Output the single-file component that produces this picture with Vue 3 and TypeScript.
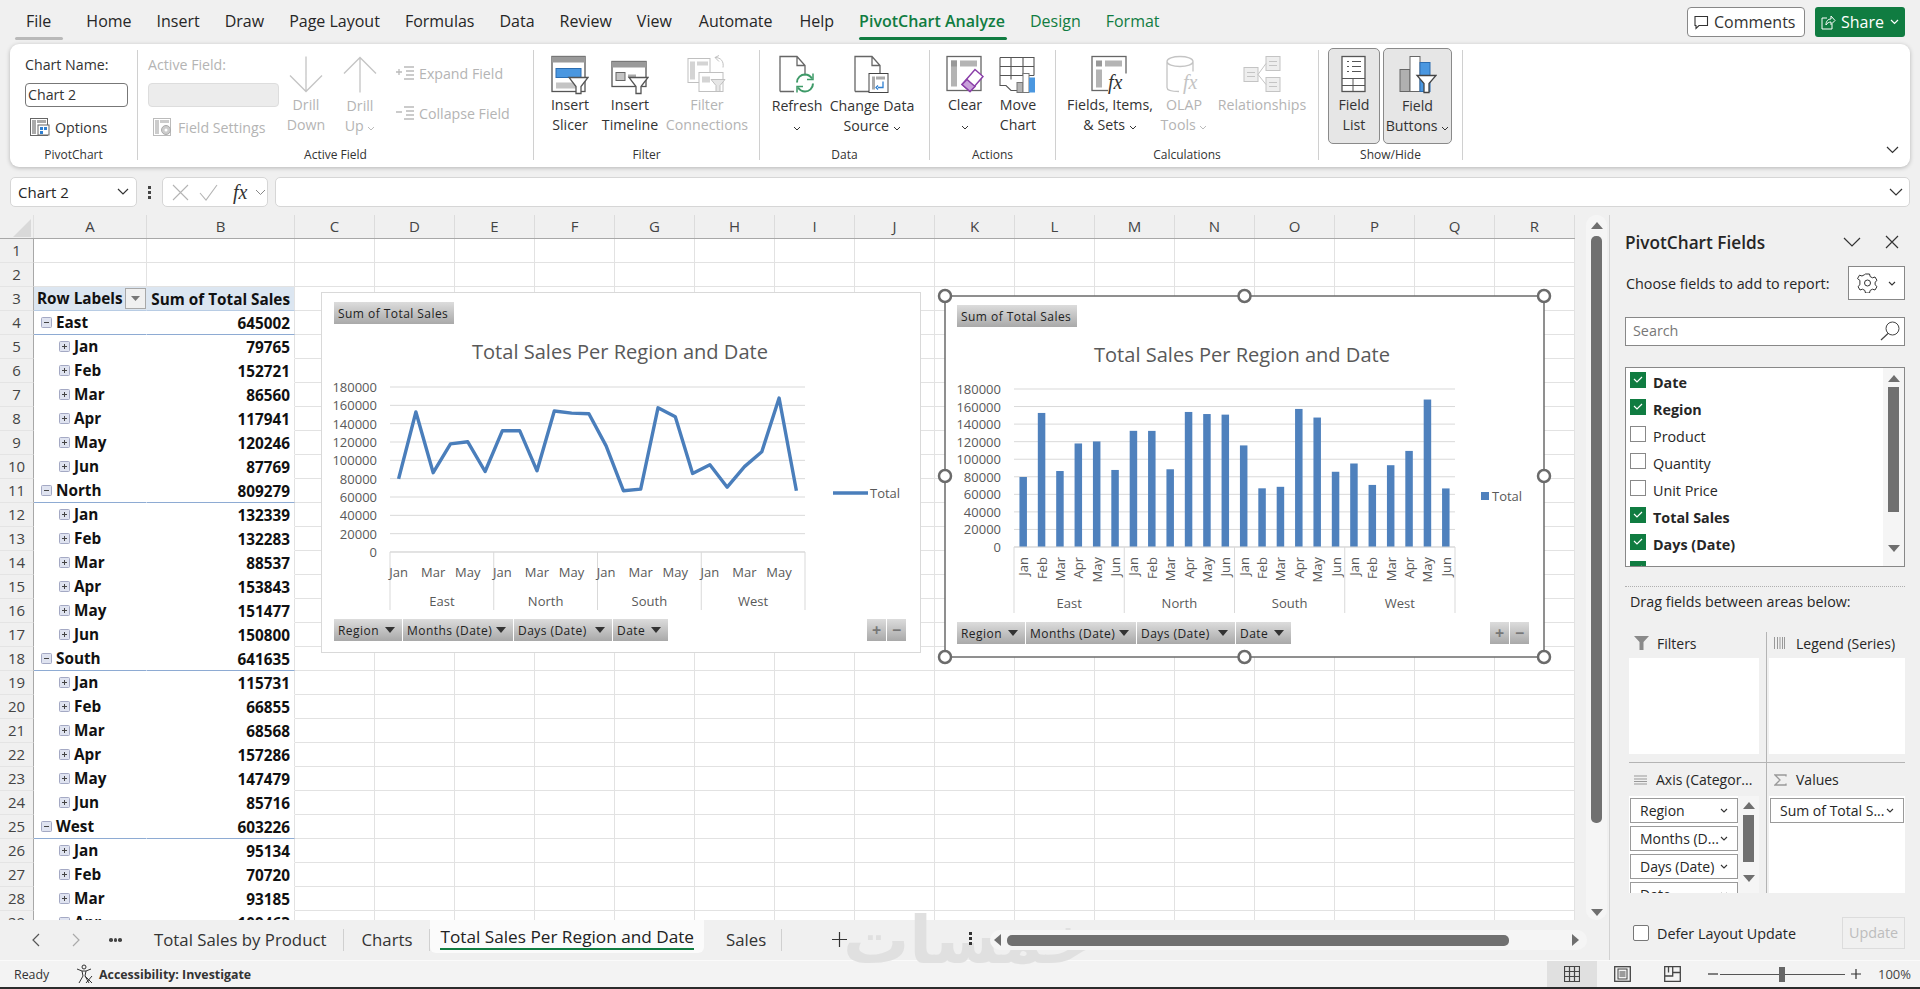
<script setup lang="ts">
const menuTabs = ['Home', 'Insert', 'Draw', 'Page Layout', 'Formulas', 'Data', 'Review', 'View', 'Automate', 'Help']
const columns = 'CDEFGHIJKLMNOPQR'.split('')

type Row = { n: number; kind: string; label: string; value: string }
const months = ['Jan', 'Feb', 'Mar', 'Apr', 'May', 'Jun']
const regions = [
  { name: 'East', total: '645002', values: [79765, 152721, 86560, 117941, 120246, 87769] },
  { name: 'North', total: '809279', values: [132339, 132283, 88537, 153843, 151477, 150800] },
  { name: 'South', total: '641635', values: [115731, 66855, 68568, 157286, 147479, 85716] },
  { name: 'West', total: '603226', values: [95134, 70720, 93185, 109463, 168000, 66724] },
]

const rows: Row[] = [
  { n: 1, kind: 'empty', label: '', value: '' },
  { n: 2, kind: 'empty', label: '', value: '' },
  { n: 3, kind: 'head', label: 'Row Labels', value: 'Sum of Total Sales' },
]
for (const r of regions) {
  rows.push({ n: rows.length + 1, kind: 'region', label: r.name, value: r.total })
  r.values.forEach((v, i) => rows.push({ n: rows.length + 1, kind: 'month', label: months[i], value: String(v) }))
}
const visibleRows = rows.slice(0, 29)

const series = regions.flatMap((r) => r.values)
const axisValues = [180000, 160000, 140000, 120000, 100000, 80000, 60000, 40000, 20000, 0]

function plot(x: number, y: number, w: number, h: number) {
  const step = w / 24
  return {
    x, y, w, h, step,
    slot: (i: number) => x + (i + 0.5) * step,
    val: (v: number) => y + h - (v / 180000) * h,
  }
}
const lineChart = plot(69, 95, 415, 165)
const barChart = plot(69, 93, 441, 158)
const linePoints = series.map((v, i) => `${lineChart.slot(i).toFixed(1)},${lineChart.val(v).toFixed(1)}`).join(' ')
const handles = [[0, 0], [299.5, 0], [599, 0], [0, 180], [599, 180], [0, 361], [299.5, 361], [599, 361]]
const lineFields = ['Region', 'Months (Date)', 'Days (Date)', 'Date']

const fieldList = [
  { name: 'Date', on: true },
  { name: 'Region', on: true },
  { name: 'Product', on: false },
  { name: 'Quantity', on: false },
  { name: 'Unit Price', on: false },
  { name: 'Total Sales', on: true },
  { name: 'Days (Date)', on: true },
  { name: 'Months (Date)', on: true },
]
const axisItems = ['Region', 'Months (D...', 'Days (Date)', 'Date']
</script>

<template>
  <div class="app">
    <header class="menu">
      <span class="tab file">File</span>
      <span v-for="t in menuTabs" :key="t" class="tab">{{ t }}</span>
      <span class="tab green active">PivotChart Analyze</span>
      <span class="tab green">Design</span>
      <span class="tab green">Format</span>
      <div class="menu-right">
        <button class="comments">
          <svg width="15" height="15" viewBox="0 0 15 15"><path d="M1 1.5h12.5v9H5l-3 3v-3H1z" fill="none" stroke="#333" stroke-width="1.1"/></svg>
          Comments
        </button>
        <button class="share">
          <svg width="15" height="15" viewBox="0 0 15 15"><path d="M6 3H1v11h10V9M5 10c0-4 2-6 5-6V1l4 4.500-4 4V7c-2 0-4 1-5 3z" fill="none" stroke="#fff" stroke-width="1"/></svg>
          Share
          <svg class="chev" width="9" height="6" viewBox="0 0 9 6"><path d="M1 1l3.500 3.500L8 1" fill="none" stroke="#fff" stroke-width="1.2"/></svg>
        </button>
      </div>
    </header>

    <section class="ribbon">
      <div class="group" style="width: 128px">
        <div class="body stack pl15">
          <div class="line">Chart Name:</div>
          <div class="input">Chart 2</div>
          <div class="line indent">
            <svg width="20" height="18" viewBox="0 0 20 18"><rect x=".5" y=".5" width="17" height="17" fill="#fff" stroke="#666"/><rect x="2" y="2" width="4" height="14" fill="#aaa"/><rect x="7" y="2" width="9" height="3" fill="#aaa"/><rect x="8" y="7" width="11" height="10" fill="#fff" stroke="#666"/><rect x="10" y="9" width="3" height="3" fill="#2f7fd0"/><rect x="14" y="9" width="3" height="3" fill="#2f7fd0"/><rect x="10" y="13" width="3" height="3" fill="#2f7fd0"/></svg>
            Options
          </div>
        </div>
        <div class="glabel">PivotChart</div>
      </div>

      <div class="group off" style="width: 396px">
        <div class="body">
          <div class="stack active-field">
            <div class="line">Active Field:</div>
            <div class="input blank"></div>
            <div class="line indent">
              <svg width="20" height="18" viewBox="0 0 20 18"><rect x=".5" y=".5" width="17" height="17" fill="#fff" stroke="#bbb"/><rect x="2" y="2" width="4" height="14" fill="#ccc"/><rect x="7" y="2" width="9" height="3" fill="#ccc"/><circle cx="13" cy="12" r="4.500" fill="#ccc" stroke="#aaa"/><circle cx="13" cy="12" r="1.500" fill="#fff"/></svg>
              Field Settings
            </div>
          </div>
          <div class="big" style="width: 54px">
            <svg class="ico" width="34" height="38" viewBox="0 0 34 38"><path d="M17 1v35M1 20l16 16 16-16" fill="none" stroke="#c4c4c4" stroke-width="1.300"/></svg>
            <span>Drill<br />Down</span>
          </div>
          <div class="big low" style="width: 54px">
            <svg class="ico" width="34" height="38" viewBox="0 0 34 38"><path d="M17 37V2M1 18L17 2l16 16" fill="none" stroke="#c4c4c4" stroke-width="1.300"/></svg>
            <span>Drill<br />Up <svg class="chev" width="8" height="5" viewBox="0 0 8 5"><path d="M1 1l3 3 3-3" fill="none" stroke="#bbb"/></svg></span>
          </div>
          <div class="small-col">
            <div class="line">
              <svg width="18" height="14" viewBox="0 0 18 14"><path d="M8 1h10M10 5h8M10 9h8M8 13h10M0 6h6M3 3v6" fill="none" stroke="#bbb" stroke-width="1.300"/></svg>
              Expand Field
            </div>
            <div class="line">
              <svg width="18" height="14" viewBox="0 0 18 14"><path d="M8 1h10M10 5h8M10 9h8M8 13h10M0 6h6" fill="none" stroke="#bbb" stroke-width="1.300"/></svg>
              Collapse Field
            </div>
          </div>
        </div>
        <div class="glabel on">Active Field</div>
      </div>

      <div class="group" style="width: 226px">
        <div class="body pl6">
          <div class="big" style="width: 60px">
            <svg class="ico" width="38" height="38" viewBox="0 0 38 38"><rect x="1" y="1" width="33" height="35" fill="#fff" stroke="#555" stroke-width="1.300"/><rect x="1" y="1" width="33" height="6" fill="#9a9a9a"/><rect x="5" y="13" width="25" height="9" fill="#4a97e0" stroke="#2c6db0"/><rect x="5" y="27" width="20" height="6" fill="#c4c4c4"/><path d="M18 22h19l-7 9v7h-5v-7z" fill="#fff" stroke="#555" stroke-width="1.300"/></svg>
            <span>Insert<br />Slicer</span>
          </div>
          <div class="big" style="width: 60px">
            <svg class="ico" width="38" height="38" viewBox="0 0 38 38"><rect x="1" y="6" width="34" height="25" fill="#fff" stroke="#555" stroke-width="1.300"/><rect x="1" y="6" width="34" height="6" fill="#9a9a9a"/><rect x="5" y="17" width="9" height="8" fill="#c4c4c4" stroke="#666"/><rect x="17" y="19" width="8" height="3" fill="#aaa"/><path d="M18 22h19l-7 9v7h-5v-7z" fill="#fff" stroke="#555" stroke-width="1.300"/></svg>
            <span>Insert<br />Timeline</span>
          </div>
          <div class="big off" style="width: 94px">
            <svg class="ico" width="40" height="38" viewBox="0 0 40 38"><rect x="1" y="3" width="22" height="24" fill="#fff" stroke="#c0c0c0"/><rect x="3" y="6" width="5" height="18" fill="#d4d4d4"/><rect x="10" y="6" width="11" height="4" fill="#d4d4d4"/><rect x="12" y="17" width="24" height="19" fill="#fff" stroke="#c0c0c0"/><rect x="15" y="21" width="8" height="6" fill="#d4d4d4"/><path d="M24 24h14l-5 6v6h-4v-6z" fill="#e6e6e6" stroke="#c0c0c0"/><path d="M28 2c6 0 9 4 8 10M28 2l4-2M28 2l4 4" fill="none" stroke="#c0c0c0"/></svg>
            <span>Filter<br />Connections</span>
          </div>
        </div>
        <div class="glabel">Filter</div>
      </div>

      <div class="group" style="width: 170px">
        <div class="body pl2">
          <div class="big low" style="width: 70px">
            <svg class="ico" width="36" height="38" viewBox="0 0 36 38"><path d="M1 36V1h17l8 9v10M1 36h14M18 1v9h8" fill="#fff" stroke="#666" stroke-width="1.300"/><path d="M18 27c0-5 4-8 8-8 3 0 5 1 7 4M34 28c0 5-4 8-8 8-3 0-5-1-7-4" fill="none" stroke="#3e9a68" stroke-width="2"/><path d="M34 18v6h-6M18 37v-6h6" fill="none" stroke="#3e9a68" stroke-width="1.500"/></svg>
            <span>Refresh<br /><svg class="chev" width="8" height="5" viewBox="0 0 8 5"><path d="M1 1l3 3 3-3" fill="none" stroke="#333"/></svg></span>
          </div>
          <div class="big low" style="width: 80px">
            <svg class="ico" width="36" height="38" viewBox="0 0 36 38"><path d="M1 36V1h17l8 9v8M1 36h14M18 1v9h8" fill="#fff" stroke="#666" stroke-width="1.300"/><rect x="15" y="18" width="19" height="19" fill="#fff" stroke="#444"/><rect x="18" y="21" width="3" height="13" fill="#aaa"/><rect x="22" y="21" width="9" height="3" fill="#aaa"/><path d="M29 26v6h-5M24 30l-2 2 2 2" fill="none" stroke="#2f7fd0" stroke-width="1.300"/></svg>
            <span>Change Data<br />Source <svg class="chev" width="8" height="5" viewBox="0 0 8 5"><path d="M1 1l3 3 3-3" fill="none" stroke="#333"/></svg></span>
          </div>
        </div>
        <div class="glabel">Data</div>
      </div>

      <div class="group" style="width: 126px">
        <div class="body pl8">
          <div class="big" style="width: 54px">
            <svg class="ico" width="38" height="38" viewBox="0 0 38 38"><rect x="1" y="1" width="34" height="34" fill="#fff" stroke="#666" stroke-width="1.300"/><rect x="5" y="5" width="6" height="26" fill="#b4b4b4"/><rect x="14" y="5" width="17" height="6" fill="#b4b4b4"/><rect x="5" y="5" width="6" height="6" fill="#999"/><path d="M16 29l13-15 8 7-13 15z" fill="#fff" stroke="#8a3ea8" stroke-width="1.500"/><path d="M16 29l5-5 8 7-5 5z" fill="#c8a0da" stroke="#8a3ea8" stroke-width="1.500"/></svg>
            <span>Clear<br /><svg class="chev" width="8" height="5" viewBox="0 0 8 5"><path d="M1 1l3 3 3-3" fill="none" stroke="#333"/></svg></span>
          </div>
          <div class="big" style="width: 52px">
            <svg class="ico" width="38" height="38" viewBox="0 0 38 38"><path d="M1 2h34v18M1 2v28h6l5 5h6M1 11h34M1 20h34M12 2v22M24 2v18" fill="#fff" stroke="#555" stroke-width="1.100"/><rect x="18" y="27" width="6" height="10" fill="#b4b4b4" stroke="#777"/><rect x="24" y="18" width="6" height="19" fill="#fff" stroke="#777"/><rect x="30" y="22" width="6" height="15" fill="#4a97e0"/></svg>
            <span>Move<br />Chart</span>
          </div>
        </div>
        <div class="glabel">Actions</div>
      </div>

      <div class="group" style="width: 263px">
        <div class="body pl4">
          <div class="big" style="width: 100px">
            <svg class="ico" width="38" height="38" viewBox="0 0 38 38"><rect x="1" y="1" width="34" height="34" fill="#fff" stroke="#666" stroke-width="1.300"/><rect x="5" y="5" width="6" height="6" fill="#999"/><rect x="14" y="5" width="17" height="6" fill="#b4b4b4"/><rect x="5" y="14" width="6" height="18" fill="#b4b4b4"/><rect x="17" y="18" width="20" height="20" fill="#fff"/><text x="17" y="33" class="fx-big">fx</text></svg>
            <span>Fields, Items,<br />&amp; Sets <svg class="chev" width="8" height="5" viewBox="0 0 8 5"><path d="M1 1l3 3 3-3" fill="none" stroke="#333"/></svg></span>
          </div>
          <div class="big off" style="width: 48px">
            <svg class="ico" width="38" height="38" viewBox="0 0 38 38"><path d="M2 6v26c0 3 5 4 12 4M2 6c0-3 6-5 13-5s13 2 13 5v10M2 6c0 3 6 5 13 5s13-2 13-5" fill="#fff" stroke="#c4c4c4" stroke-width="1.300"/><text x="18" y="33" class="fx-big faint">fx</text></svg>
            <span>OLAP<br />Tools <svg class="chev" width="8" height="5" viewBox="0 0 8 5"><path d="M1 1l3 3 3-3" fill="none" stroke="#bbb"/></svg></span>
          </div>
          <div class="big off" style="width: 108px">
            <svg class="ico" width="38" height="38" viewBox="0 0 38 38"><rect x="1" y="12" width="14" height="14" fill="#eee" stroke="#c4c4c4"/><rect x="23" y="1" width="14" height="14" fill="#eee" stroke="#c4c4c4"/><rect x="23" y="22" width="14" height="14" fill="#eee" stroke="#c4c4c4"/><path d="M15 19l8-11M15 19l8 10M4 17h8M4 21h8M26 6h8M26 10h8M26 27h8M26 31h8" stroke="#c4c4c4" fill="none"/></svg>
            <span>Relationships</span>
          </div>
        </div>
        <div class="glabel">Calculations</div>
      </div>

      <div class="group" style="width: 144px">
        <div class="body pl9">
          <div class="big toggle" style="width: 52px">
            <svg class="ico" width="26" height="38" viewBox="0 0 26 38"><rect x="1" y="1" width="23" height="35" fill="#fff" stroke="#555" stroke-width="1.300"/><path d="M1 23h23M1 30h23M12 23v13M6 6h2M11 6h9M6 11h2M11 11h9M6 16h2M11 16h9" stroke="#555" fill="none"/></svg>
            <span>Field<br />List</span>
          </div>
          <div class="big toggle low" style="width: 69px">
            <svg class="ico" width="38" height="38" viewBox="0 0 38 38"><rect x="1" y="14" width="10" height="22" fill="#b0b0b0" stroke="#666"/><rect x="11" y="1" width="10" height="35" fill="#fff" stroke="#666"/><rect x="21" y="7" width="10" height="29" fill="#4a97e0" stroke="#2c6db0"/><path d="M18 20h19l-7 8v9h-5v-9z" fill="#fff" stroke="#444" stroke-width="1.300"/></svg>
            <span>Field<br />Buttons <svg class="chev" width="8" height="5" viewBox="0 0 8 5"><path d="M1 1l3 3 3-3" fill="none" stroke="#333"/></svg></span>
          </div>
        </div>
        <div class="glabel">Show/Hide</div>
      </div>

      <svg class="collapse" width="13" height="8" viewBox="0 0 13 8"><path d="M1 1l5.500 5.500L12 1" fill="none" stroke="#333" stroke-width="1.200"/></svg>
    </section>

    <section class="formula">
      <div class="namebox">
        Chart 2
        <svg width="12" height="8" viewBox="0 0 12 8"><path d="M1 1l5 5 5-5" fill="none" stroke="#333" stroke-width="1.200"/></svg>
      </div>
      <div class="dots"><i></i><i></i><i></i></div>
      <div class="fxbox">
        <svg width="17" height="17" viewBox="0 0 17 17"><path d="M1 1l15 15M16 1L1 16" stroke="#b4b4b4" stroke-width="1.100"/></svg>
        <svg width="19" height="17" viewBox="0 0 19 17"><path d="M1 9l6 7L18 1" fill="none" stroke="#b4b4b4" stroke-width="1.100"/></svg>
        <span class="fx">fx</span>
        <svg width="11" height="7" viewBox="0 0 11 7"><path d="M1 1l4.500 4.500L10 1" fill="none" stroke="#888"/></svg>
      </div>
      <div class="fxinput">
        <svg width="14" height="8" viewBox="0 0 14 8"><path d="M1 1l6 6 6-6" fill="none" stroke="#333" stroke-width="1.200"/></svg>
      </div>
    </section>

    <main class="main">
      <div class="left">
        <div class="sheet-row">
          <div class="grid">
            <div class="col-head">
              <div class="corner"><svg width="18" height="18" viewBox="0 0 18 18"><path d="M18 0v18H0z" fill="#d9d9d9"/></svg></div>
              <div class="ch a">A</div>
              <div class="ch b">B</div>
              <div v-for="c in columns" :key="c" class="ch">{{ c }}</div>
            </div>
            <div v-for="r in visibleRows" :key="r.n" class="row">
              <div class="rh">{{ r.n }}</div>
              <div class="cell a" :class="r.kind">
                <template v-if="r.kind === 'head'">
                  <span>{{ r.label }}</span>
                  <span class="drop"><svg width="9" height="5" viewBox="0 0 9 5"><path d="M0 0h9L4.500 5z" fill="#777"/></svg></span>
                </template>
                <template v-else-if="r.kind === 'region' || r.kind === 'month'">
                  <span class="exp">
                    <svg width="11" height="11" viewBox="0 0 11 11"><rect x=".5" y=".5" width="10" height="10" rx="1" fill="#dfe3f0" stroke="#a4a9c4"/><path d="M3 5.500h5" stroke="#444"/><path v-if="r.kind === 'month'" d="M5.500 3v5" stroke="#444"/></svg>
                  </span>
                  <span>{{ r.label }}</span>
                </template>
              </div>
              <div class="cell b" :class="r.kind">{{ r.value }}</div>
              <div v-for="c in columns" :key="c" class="cell"></div>
            </div>

            <div class="chart first" style="left: 321px; top: 77px">
              <svg width="600" height="361" viewBox="0 0 600 361">
                <g class="gridlines">
                  <line v-for="v in axisValues" :key="v" :x1="lineChart.x" :x2="lineChart.x + lineChart.w" :y1="lineChart.val(v)" :y2="lineChart.val(v)" />
                </g>
                <text v-for="v in axisValues" :key="v" class="tick" x="56" :y="lineChart.val(v) + 5" text-anchor="end">{{ v }}</text>
                <text class="title" x="299" y="67" text-anchor="middle" textLength="296" lengthAdjust="spacingAndGlyphs">Total Sales Per Region and Date</text>
                <polyline :points="linePoints" fill="none" stroke="#4a7ebb" stroke-width="3.400" stroke-linejoin="round" />
                <line class="sep" x1="69" x2="484" y1="260" y2="260" />
                <g v-for="(r, i) in regions" :key="r.name">
                  <line class="sep" :x1="69 + i * 103.75" :x2="69 + i * 103.75" y1="260" y2="318" />
                  <text class="tick" :x="lineChart.slot(i * 6)" y="285" text-anchor="middle">Jan</text>
                  <text class="tick" :x="lineChart.slot(i * 6 + 2)" y="285" text-anchor="middle">Mar</text>
                  <text class="tick" :x="lineChart.slot(i * 6 + 4)" y="285" text-anchor="middle">May</text>
                  <text class="tick" :x="69 + (i + 0.5) * 103.75" y="314" text-anchor="middle">{{ r.name }}</text>
                </g>
                <line class="sep" x1="484" x2="484" y1="260" y2="318" />
                <line x1="512" x2="547" y1="201" y2="201" stroke="#4a7ebb" stroke-width="3.400" />
                <text class="tick" x="549" y="206">Total</text>
              </svg>
              <div class="fbtn top">Sum of Total Sales</div>
              <div class="fbtn-row">
                <div v-for="(f, i) in lineFields" :key="f" class="fbtn" :class="'f' + i">{{ f }}<i class="tri"></i></div>
                <div class="zoomers"><div class="fbtn zb">+</div><div class="fbtn zb">−</div></div>
              </div>
            </div>

            <div class="chart selected" style="left: 945px; top: 81px">
              <svg width="599" height="361" viewBox="0 0 599 361">
                <g class="gridlines">
                  <line v-for="v in axisValues" :key="v" :x1="barChart.x" :x2="barChart.x + barChart.w" :y1="barChart.val(v)" :y2="barChart.val(v)" />
                </g>
                <text v-for="v in axisValues" :key="v" class="tick" x="56" :y="barChart.val(v) + 5" text-anchor="end">{{ v }}</text>
                <text class="title" x="297" y="66" text-anchor="middle" textLength="296" lengthAdjust="spacingAndGlyphs">Total Sales Per Region and Date</text>
                <rect v-for="(v, i) in series" :key="i" :x="barChart.slot(i) - 3.750" :y="barChart.val(v)" width="7.500" :height="barChart.y + barChart.h - barChart.val(v)" fill="#4f81bd" />
                <line class="sep" x1="69" x2="510" y1="251" y2="251" />
                <text v-for="(v, i) in series" :key="'m' + i" class="tick" text-anchor="end" :transform="`translate(${barChart.slot(i) + 5} 261) rotate(-90)`">{{ months[i % 6] }}</text>
                <g v-for="(r, i) in regions" :key="r.name">
                  <line class="sep" :x1="69 + i * 110.25" :x2="69 + i * 110.25" y1="251" y2="317" />
                  <text class="tick" :x="69 + (i + 0.5) * 110.25" y="312" text-anchor="middle">{{ r.name }}</text>
                </g>
                <line class="sep" x1="510" x2="510" y1="251" y2="317" />
                <rect x="536" y="196" width="8" height="8" fill="#4f81bd" />
                <text class="tick" x="547" y="205">Total</text>
                <rect class="frame" x="0" y="0" width="599" height="361" />
                <circle v-for="(h, i) in handles" :key="i" class="handle" :cx="h[0]" :cy="h[1]" r="6" />
              </svg>
              <div class="fbtn top">Sum of Total Sales</div>
              <div class="fbtn-row">
                <div v-for="(f, i) in lineFields" :key="f" class="fbtn" :class="'f' + i">{{ f }}<i class="tri"></i></div>
                <div class="zoomers"><div class="fbtn zb">+</div><div class="fbtn zb">−</div></div>
              </div>
            </div>
          </div>

          <div class="vscroll">
            <i class="arrow up"></i>
            <div class="vthumb"></div>
            <i class="arrow down"></i>
          </div>
        </div>

        <div class="sheet-tabs">
          <svg class="nav" width="8" height="14" viewBox="0 0 8 14"><path d="M7 1L1 7l6 6" fill="none" stroke="#555" stroke-width="1.200"/></svg>
          <svg class="nav next" width="8" height="14" viewBox="0 0 8 14"><path d="M1 1l6 6-6 6" fill="none" stroke="#aaa" stroke-width="1.200"/></svg>
          <span class="more"><i></i><i></i><i></i></span>
          <span class="stab">Total Sales by Product</span>
          <span class="stab">Charts</span>
          <span class="stab current">Total Sales Per Region and Date</span>
          <span class="stab sales">Sales</span>
          <svg class="plus" width="15" height="15" viewBox="0 0 15 15"><path d="M7.500 0v15M0 7.500h15" stroke="#333" stroke-width="1.200"/></svg>
          <div class="dots tabdots"><i></i><i></i><i></i></div>
          <div class="hscroll">
            <i class="arrow left"></i>
            <div class="hthumb"></div>
            <i class="arrow right"></i>
          </div>
          <span class="watermark">خمسات</span>
        </div>
      </div>

      <aside class="pane">
        <div class="pane-title">
          <span>PivotChart Fields</span>
          <svg class="pt-chev" width="18" height="10" viewBox="0 0 18 10"><path d="M1 1l8 8 8-8" fill="none" stroke="#333" stroke-width="1.200"/></svg>
          <svg class="pt-x" width="14" height="14" viewBox="0 0 14 14"><path d="M1 1l12 12M13 1L1 13" stroke="#333" stroke-width="1.200"/></svg>
        </div>
        <div class="choose">
          <span>Choose fields to add to report:</span>
          <div class="gear">
            <svg width="21" height="20" viewBox="0 0 21 20"><path d="M8.500 1h4l.7 2.600 2.300 1.200 2.500-.8 2 3.400-1.900 1.800v2.600l1.900 1.800-2 3.400-2.500-.8-2.300 1.200-.7 2.600h-4l-.7-2.600-2.300-1.200-2.500.8-2-3.400 1.900-1.800V7.400L.5 5.600l2-3.400 2.500.8 2.300-1.200z" fill="none" stroke="#333"/><circle cx="10.500" cy="10" r="3" fill="none" stroke="#333"/></svg>
            <svg width="8" height="5" viewBox="0 0 8 5"><path d="M1 1l3 3 3-3" fill="none" stroke="#333" stroke-width="1.100"/></svg>
          </div>
        </div>
        <div class="search">
          <span>Search</span>
          <svg width="20" height="20" viewBox="0 0 20 20"><circle cx="12.500" cy="7.500" r="6.500" fill="none" stroke="#444"/><path d="M8 12.500L1 19" stroke="#444" stroke-width="1.200"/></svg>
        </div>
        <div class="fields">
          <div class="field-rows">
            <div v-for="f in fieldList" :key="f.name" class="field" :class="{ on: f.on }">
              <span class="box">
                <svg v-if="f.on" width="10" height="7" viewBox="0 0 10 7"><path d="M1 3l3 3 5-5" fill="none" stroke="#fff" stroke-width="1.200"/></svg>
              </span>
              <span>{{ f.name }}</span>
            </div>
          </div>
          <div class="field-scroll">
            <i class="arrow up"></i>
            <div class="fthumb"></div>
            <i class="arrow down"></i>
          </div>
        </div>
        <div class="drag">Drag fields between areas below:</div>
        <div class="zones">
          <div class="zone z-top">
            <div class="zhead tight">
              <svg width="16" height="14" viewBox="0 0 16 14"><path d="M0 0h15L9.500 6v8h-4V6z" fill="#8a8a8a"/></svg>
              Filters
            </div>
            <div class="zbody tall"></div>
          </div>
          <div class="zone z-top z-right">
            <div class="zhead wider">
              <svg width="11" height="12" viewBox="0 0 11 12"><path d="M.5 0v12M3.500 0v12M6 0v12M8.500 0v12M10.500 0v12" stroke="#999"/></svg>
              Legend (Series)
            </div>
            <div class="zbody tall"></div>
          </div>
          <div class="zone">
            <div class="zhead">
              <svg width="13" height="10" viewBox="0 0 13 10"><path d="M0 1h13M0 4h13M0 6.500h13M0 9h13" stroke="#999"/></svg>
              Axis (Categor...
            </div>
            <div class="zbody axis">
              <div class="axis-items">
                <div v-for="a in axisItems" :key="a" class="pill">
                  <span>{{ a }}</span>
                  <svg width="8" height="5" viewBox="0 0 8 5"><path d="M1 1l3 3 3-3" fill="none" stroke="#333" stroke-width="1.100"/></svg>
                </div>
              </div>
              <div class="axis-scroll">
                <i class="arrow up"></i>
                <div class="athumb"></div>
                <i class="arrow down"></i>
              </div>
            </div>
          </div>
          <div class="zone z-right">
            <div class="zhead">
              <svg width="13" height="12" viewBox="0 0 13 12"><path d="M12 2.500V1H1l5 5-5 5h11V9.500" fill="none" stroke="#999" stroke-width="1.300"/></svg>
              Values
            </div>
            <div class="zbody">
              <div class="pill wide">
                <span>Sum of Total S...</span>
                <svg width="8" height="5" viewBox="0 0 8 5"><path d="M1 1l3 3 3-3" fill="none" stroke="#333" stroke-width="1.100"/></svg>
              </div>
            </div>
          </div>
        </div>
        <div class="defer">
          <span class="box2"></span>
          <span class="defer-label">Defer Layout Update</span>
          <span class="update">Update</span>
        </div>
      </aside>
    </main>

    <footer class="status">
      <span class="ready">Ready</span>
      <svg width="18" height="20" viewBox="0 0 18 20"><circle cx="8" cy="3" r="2" fill="none" stroke="#333"/><path d="M1 5l5 2h4l5-2M6 7l1 5-4 7M10 7l-1 5 4 7M9 12l7 7M16 12l-6 7" fill="none" stroke="#333"/></svg>
      <b class="access">Accessibility: Investigate</b>
      <div class="views">
        <span class="vbtn current">
          <svg width="16" height="16" viewBox="0 0 16 16"><path d="M.5.500h15v15H.500zM.5 5.500h15M.5 10.500h15M5.500.5v15M10.500.5v15" fill="none" stroke="#444" stroke-width="1.200"/></svg>
        </span>
        <span class="vbtn">
          <svg width="17" height="16" viewBox="0 0 17 16"><rect x=".7" y=".7" width="15.600" height="14.600" fill="none" stroke="#444" stroke-width="1.300"/><rect x="4" y="3" width="9" height="10" fill="none" stroke="#444"/><path d="M5.500 6h6M5.500 8h6M5.500 10h6" stroke="#444"/></svg>
        </span>
        <span class="vbtn">
          <svg width="17" height="16" viewBox="0 0 17 16"><path d="M.7.700v14.600h15.600V.7zM.7 10h8V.7M4.500.7V6.500M8.700 6.500H16" fill="none" stroke="#444" stroke-width="1.300"/></svg>
        </span>
      </div>
      <div class="zoom">
        <svg width="10" height="2" viewBox="0 0 10 2"><path d="M0 1h10" stroke="#333" stroke-width="1.200"/></svg>
        <div class="slider"><i></i></div>
        <svg class="zplus" width="10" height="10" viewBox="0 0 10 10"><path d="M0 5h10M5 0v10" stroke="#333" stroke-width="1.200"/></svg>
        <span class="pct">100%</span>
      </div>
    </footer>
    <div class="taskbar"></div>
  </div>
</template>

<style>
html, body { margin: 0; padding: 0; background: #f0f0f0; overflow: hidden; }
</style>

<style scoped>
.app {
  width: 1920px;
  height: 989px;
  display: flex;
  flex-direction: column;
  background: #f0f0f0;
  font-family: "Open Sans", "Noto Sans", sans-serif;
  color: #262626;
  overflow: hidden;
}

.menu {
  height: 44px;
  flex: none;
  display: flex;
  align-items: center;
  gap: 25px;
  padding-left: 26px;
  font-size: 16px;
  box-sizing: border-box;
  padding-bottom: 2px;
}
.tab { position: relative; white-space: nowrap; }
.tab.file { margin-right: 10px; }
.tab:nth-child(10), .tab:nth-child(11) { margin-left: 2px; }
.tab.file::after, .tab.active::after {
  content: "";
  position: absolute;
  left: -11px;
  right: -12px;
  top: 27px;
  height: 3px;
  background: #b9b9b9;
  border-radius: 2px;
}
.tab.active { font-weight: 600; }
.tab.active::after { background: #107c41; left: 0; right: -2px; height: 3px; }
.tab.green { color: #107c41; }
.menu-right { margin-left: auto; display: flex; gap: 10px; padding-right: 15px; padding-top: 2px; }
.comments, .share {
  height: 30px;
  display: flex;
  align-items: center;
  font: inherit;
  box-sizing: border-box;
}
.comments { width: 118px; background: #fff; border: 1px solid #888; border-radius: 4px; gap: 5px; padding: 0 6px; color: #333; }
.share { width: 90px; background: #107c41; border: 0; border-radius: 3px; color: #fff; gap: 5px; padding: 0 6px; }
.share .chev { margin-left: 1px; }

.ribbon {
  height: 123px;
  flex: none;
  margin: 0 10px;
  background: #fff;
  border-radius: 9px;
  box-shadow: 0 1px 4px rgba(0, 0, 0, .25);
  display: flex;
  position: relative;
  font-size: 14.2px;
  color: #333;
}
.group {
  height: 110px;
  margin-top: 6px;
  border-right: 1px solid #d0d0d0;
  box-sizing: border-box;
  display: flex;
  flex-direction: column;
  flex: none;
}
.body { height: 96px; flex: none; display: flex; }
.glabel { height: 18px; line-height: 18px; text-align: center; font-size: 12px; color: #333; flex: none; }
.group.off, .off { color: #b4b4b4; }
.glabel.on { color: #333; }
.pl15 { padding-left: 15px; }
.pl2 { padding-left: 2px; }
.pl4 { padding-left: 4px; }
.pl6 { padding-left: 6px; }
.pl8 { padding-left: 8px; }
.pl9 { padding-left: 9px; }
.stack { flex-direction: column; display: flex; gap: 9px; padding-top: 4px; box-sizing: border-box; }
.line { height: 20px; display: flex; align-items: center; gap: 5px; white-space: nowrap; }
.line.indent { padding-left: 5px; height: 22px; }
.input {
  width: 103px;
  height: 24px;
  box-sizing: border-box;
  border: 1px solid #777;
  border-radius: 4px;
  line-height: 22px;
  padding-left: 2px;
  flex: none;
}
.input.blank { width: 131px; background: #ececec; border-color: #ddd; }
.active-field { padding-left: 10px; width: 141px; }
.small-col { padding: 13px 0 0 9px; display: flex; flex-direction: column; gap: 20px; box-sizing: border-box; }
.big {
  display: flex;
  flex-direction: column;
  align-items: center;
  padding-top: 4px;
  box-sizing: border-box;
  text-align: center;
  line-height: 20px;
  flex: none;
  white-space: nowrap;
}
.big .ico { height: 41px; flex: none; }
.big.low span { padding-top: 1px; }
.toggle {
  height: 96px;
  margin: -2px 3px 0 0;
  padding-top: 5px;
  background: #e6e6e6;
  border: 1px solid #8a8a8a;
  border-radius: 5px;
}
.fx-big { font: italic 20px "Liberation Serif", serif; fill: #333; }
.fx-big.faint { fill: #c4c4c4; }
.collapse { position: absolute; right: 11px; bottom: 13px; }

.formula {
  height: 30px;
  flex: none;
  margin: 10px 10px 8px;
  display: flex;
  align-items: stretch;
  font-size: 15px;
}
.namebox, .fxbox, .fxinput {
  background: #fff;
  border: 1px solid #d6d6d6;
  border-radius: 5px;
  box-sizing: border-box;
  display: flex;
  align-items: center;
}
.namebox { width: 127px; padding: 0 7px; justify-content: space-between; }
.dots { width: 25px; display: flex; flex-direction: column; gap: 2px; align-items: center; justify-content: center; }
.dots i { width: 3px; height: 3px; background: #444; }
.fxbox { width: 106px; padding: 0 0 0 9px; gap: 10px; }
.fx { font: italic 20px "Liberation Serif", serif; color: #333; margin: 0 -2px 0 5px; }
.fxinput { flex: 1; margin-left: 7px; justify-content: flex-end; padding-right: 6px; }

.main { flex: 1; min-height: 0; display: flex; }
.left { width: 1609px; flex: none; display: flex; flex-direction: column; }
.sheet-row { height: 705px; flex: none; display: flex; }
.grid { width: 1575px; height: 705px; position: relative; overflow: hidden; background: #fff; }
.col-head { display: flex; height: 24px; background: #f0f0f0; border-bottom: 1px solid #a8a8a8; box-sizing: border-box; }
.corner { width: 34px; flex: none; display: flex; align-items: flex-end; justify-content: flex-end; box-sizing: border-box; padding: 0 2px 1px 0; border-right: 1px solid #e0e0e0; }
.ch { width: 80px; flex: none; text-align: center; line-height: 23px; font-size: 15px; color: #444; border-right: 1px solid #dcdcdc; box-sizing: border-box; }
.ch.a { width: 113px; }
.ch.b { width: 148px; }
.row { display: flex; height: 24px; }
.rh {
  width: 34px;
  flex: none;
  box-sizing: border-box;
  background: #f0f0f0;
  border-right: 1px solid #a8a8a8;
  border-bottom: 1px solid #e4e4e4;
  text-align: center;
  line-height: 23px;
  font-size: 15px;
  color: #444;
}
.cell {
  width: 80px;
  flex: none;
  box-sizing: border-box;
  border-right: 1px solid #e2e2e2;
  border-bottom: 1px solid #e2e2e2;
  font-size: 15.3px;
  font-weight: 700;
  color: #111;
  line-height: 25px;
  white-space: nowrap;
  overflow: hidden;
}
.cell.a { width: 113px; display: flex; align-items: center; }
.cell.b { width: 148px; text-align: right; padding-right: 4px; }
.cell.head { background: #dce6f1; border-color: #dce6f1; border-bottom-color: #b8cce4; }
.cell.a.head { padding-left: 3px; justify-content: space-between; }
.cell.b.head { border-right-color: #e2e2e2; }
.cell.region { border-bottom-color: #8eabd3; border-right-color: transparent; }
.cell.b.region { border-right-color: #e2e2e2; }
.cell.month { border-bottom-color: transparent; border-right-color: transparent; }
.cell.b.month { border-right-color: #e2e2e2; }
.exp { display: flex; margin-right: 4px; }
.cell.a.region { padding-left: 7px; }
.cell.a.month { padding-left: 25px; }
.drop {
  width: 21px;
  height: 21px;
  flex: none;
  box-sizing: border-box;
  background: #f0f0f0;
  border: 1px solid #a8a8a8;
  display: flex;
  align-items: center;
  justify-content: center;
}

.chart {
  position: absolute;
  width: 600px;
  height: 361px;
  background: #fff;
  box-sizing: border-box;
  border: 1px solid #d9d9d9;
}
.chart svg { position: absolute; left: -1px; top: -1px; overflow: visible; }
.chart.selected { width: 599px; border-color: transparent; }
.gridlines line { stroke: #d9d9d9; stroke-width: 1; }
.sep { stroke: #d9d9d9; stroke-width: 1; }
.tick { font: 13px "Open Sans", sans-serif; fill: #595959; }
.title { font: 20px "Open Sans", sans-serif; fill: #595959; }
.frame { fill: none; stroke: #6b6b6b; stroke-width: 1.500; }
.handle { fill: #fff; stroke: #6b6b6b; stroke-width: 2.500; }
.fbtn {
  height: 22px;
  display: flex;
  align-items: center;
  justify-content: space-between;
  box-sizing: border-box;
  padding: 0 4px;
  font-size: 12px;
  letter-spacing: .45px;
  color: #222;
  background: linear-gradient(#dcdcdc, #a9a9a9);
  white-space: nowrap;
}
.fbtn.top { position: absolute; left: 11px; top: 8px; width: 120px; }
.first .fbtn.top { left: 12px; top: 9px; }
.fbtn-row { position: absolute; left: 11px; right: 15px; top: 325px; display: flex; gap: 1px; }
.first .fbtn-row { left: 12px; right: 14px; top: 326px; }
.chart.selected .fbtn-row { right: 14px; }
.f0 { width: 68px; }
.f1 { width: 110px; }
.f2 { width: 98px; }
.f3 { width: 55px; }
.tri { width: 0; height: 0; border: 5px solid transparent; border-top: 6px solid #333; border-bottom: 0; margin-right: 3px; }
.zoomers { margin-left: auto; display: flex; gap: 1px; }
.fbtn.zb { width: 19px; justify-content: center; padding: 0; font-size: 16px; font-weight: 700; color: #777; letter-spacing: 0; }

.arrow { display: block; width: 0; height: 0; flex: none; border: 6px solid transparent; }
.arrow.up { border-bottom: 7px solid #6f6f6f; border-top: 0; }
.arrow.down { border-top: 7px solid #6f6f6f; border-bottom: 0; }
.arrow.left { border-right: 7px solid #6f6f6f; border-left: 0; }
.arrow.right { border-left: 7px solid #6f6f6f; border-right: 0; }

.vscroll {
  width: 21px;
  margin-left: 11px;
  height: 705px;
  background: #f5f5f5;
  border-radius: 10px;
  display: flex;
  flex-direction: column;
  align-items: center;
  box-sizing: border-box;
  padding-top: 7px;
}
.vthumb { width: 11px; height: 587px; margin: 7px 0 0; background: #707070; border-radius: 5px; }
.vscroll .down { margin-top: auto; margin-bottom: 4px; }

.sheet-tabs {
  height: 40px;
  flex: none;
  display: flex;
  align-items: center;
  position: relative;
  z-index: 2;
  font-size: 16.8px;
  color: #333;
  box-sizing: border-box;
  padding-left: 32px;
  overflow: visible;
}
.nav { flex: none; }
.nav.next { margin-left: 32px; }
.more { display: flex; gap: 1px; margin: 0 15px 0 29px; width: 13px; flex: none; }
.more i { width: 3.5px; height: 3.5px; border-radius: 50%; background: #444; flex: none; }
.stab { padding: 0 17px; border-right: 1px solid #d0d0d0; white-space: nowrap; height: 22px; line-height: 22px; z-index: 1; box-sizing: content-box; }
.stab.current {
  background: #fbfbfb;
  font-weight: 500;
  font-size: 17.2px;
  color: #222;
  align-self: flex-start;
  height: 33px;
  margin-left: 0;
  line-height: 34px;
  border: 0;
  border-radius: 0 0 6px 6px;
  position: relative;
  padding: 0 10px;
}
.stab.current::after { content: ""; position: absolute; left: 10px; right: 10px; bottom: 3px; height: 2px; background: #107c41; }
.stab.sales { padding: 0 15px 0 22px; }
.plus { position: absolute; left: 832px; top: 12px; z-index: 1; }
.tabdots { position: absolute; left: 958px; top: 12px; z-index: 1; }
.tabdots i { background: #333; }
.hscroll {
  position: absolute;
  left: 990px;
  width: 597px;
  top: 10px;
  height: 20px;
  background: #f5f5f5;
  border-radius: 10px;
  display: flex;
  align-items: center;
  padding: 0 4px;
  box-sizing: border-box;
  z-index: 1;
}
.hthumb { width: 502px; height: 11px; margin-left: 6px; background: #707070; border-radius: 5px; }
.hscroll .right { margin-left: auto; margin-right: 4px; }
.watermark {
  position: absolute;
  left: 843px;
  top: -14px;
  font: 700 66px "DejaVu Sans", sans-serif;
  color: #e0e0e0;
  line-height: 70px;
  white-space: nowrap;
}

.pane {
  flex: 1;
  border-left: 1px solid #d2d2d2;
  box-sizing: border-box;
  padding: 15px 15px 0 15px;
  font-size: 14.35px;
  color: #262626;
  display: flex;
  flex-direction: column;
}
.pane-title { height: 24px; display: flex; align-items: center; font-size: 17.2px; font-weight: 600; margin-bottom: 12px; }
.pane-title span { flex: 1; }
.pt-chev { margin-right: 24px; }
.pt-x { margin-right: 6px; }
.choose { height: 34px; margin-bottom: 17px; display: flex; align-items: center; justify-content: space-between; padding-left: 1px; }
.gear {
  width: 57px;
  height: 34px;
  background: #fff;
  border: 1px solid #888;
  box-sizing: border-box;
  display: flex;
  align-items: center;
  justify-content: center;
  gap: 10px;
}
.search {
  height: 29px;
  flex: none;
  background: #fff;
  border: 1px solid #888;
  box-sizing: border-box;
  margin-bottom: 21px;
  display: flex;
  align-items: center;
  justify-content: space-between;
  padding: 0 4px 2px 7px;
  color: #777;
}
.fields { height: 200px; flex: none; background: #fff; border: 1px solid #888; box-sizing: border-box; display: flex; overflow: hidden; margin-bottom: 19px; }
.field-rows { flex: 1; padding: 3px 0 0 4px; }
.field { height: 27px; display: flex; gap: 7px; align-items: flex-start; }
.field span:last-child { line-height: 27px; margin-top: -2px; }
.field.on { font-weight: 700; }
.box { width: 16px; height: 16px; margin-top: 1px; flex: none; box-sizing: border-box; border: 1px solid #888; display: flex; justify-content: center; padding-top: 3px; }
.field.on .box { background: #107c41; border-color: #107c41; }
.field-scroll { width: 21px; background: #f5f5f5; display: flex; flex-direction: column; align-items: center; padding-top: 7px; box-sizing: border-box; }
.fthumb { width: 11px; height: 125px; margin-top: 5px; background: #707070; }
.field-scroll .down { margin-top: 33px; }
.drag { height: 30px; line-height: 30px; border-top: 1px dotted #b0b0b0; padding-left: 5px; margin-bottom: 15px; font-size: 14.3px; flex: none; white-space: nowrap; }
.zones { margin-left: 4px; display: grid; grid-template-columns: 137px 139px; flex: none; }
.zone { box-sizing: border-box; padding-right: 7px; }
.z-top { border-bottom: 1px solid #b4b4b4; height: 131px; }
.z-right { border-left: 1px solid #b4b4b4; padding: 0 0 0 2px; }
.zhead { height: 26px; display: flex; align-items: center; gap: 9px; padding: 0 0 4px 5px; box-sizing: border-box; font-size: 14px; white-space: nowrap; }
.zhead.tight { gap: 7px; }
.zhead.wider { gap: 11px; }
.zone:not(.z-top) .zhead { height: 33px; padding-bottom: 0; }
.zbody { background: #fff; height: 97px; overflow: hidden; }
.zbody.tall { height: 96px; }
.zbody.axis { display: flex; }
.axis-items { flex: 1; padding: 2px 0 0 1px; display: flex; flex-direction: column; gap: 3px; }
.pill {
  height: 25px;
  flex: none;
  box-sizing: border-box;
  border: 1px solid #9a9a9a;
  background: #fff;
  display: flex;
  align-items: center;
  justify-content: space-between;
  padding: 0 9px;
  white-space: nowrap;
  font-size: 14px;
}
.pill.wide { margin: 2px 1px 0 1px; padding: 0 9px; }
.axis-scroll { width: 21px; background: #f5f5f5; display: flex; flex-direction: column; align-items: center; padding-top: 6px; box-sizing: border-box; }
.athumb { width: 11px; height: 47px; margin-top: 6px; background: #707070; }
.axis-scroll .down { margin-top: 13px; }
.defer { margin-top: 24px; height: 32px; display: flex; align-items: center; padding-left: 8px; }
.box2 { width: 16px; height: 16px; background: #fff; border: 1px solid #777; border-radius: 2px; box-sizing: border-box; }
.defer-label { margin-left: 8px; flex: 1; }
.update { width: 63px; height: 32px; box-sizing: border-box; border: 1px solid #dcdcdc; text-align: center; line-height: 30px; color: #bdbdbd; }

.status {
  height: 27px;
  flex: none;
  background: #f3f3f3;
  border-top: 1px solid #fafafa;
  box-sizing: border-box;
  display: flex;
  align-items: center;
  font-size: 12.4px;
  padding-left: 14px;
  color: #333;
}
.ready { width: 62px; }
.access { margin-left: 5px; font-weight: 700; }
.views { margin-left: auto; display: flex; align-self: stretch; }
.vbtn { width: 50px; display: flex; align-items: center; justify-content: center; }
.vbtn.current { background: #e0e0e0; }
.zoom { width: 223px; display: flex; align-items: center; padding-left: 11px; box-sizing: border-box; gap: 2px; }
.slider { width: 125px; height: 1px; background: #555; position: relative; }
.slider i { position: absolute; left: 59px; top: -7px; width: 6px; height: 15px; background: #666; }
.zplus { margin-left: 4px; }
.pct { margin-left: 15px; font-size: 13px; color: #444; }
.taskbar { height: 2px; flex: none; background: #2b2b2b; }
</style>
